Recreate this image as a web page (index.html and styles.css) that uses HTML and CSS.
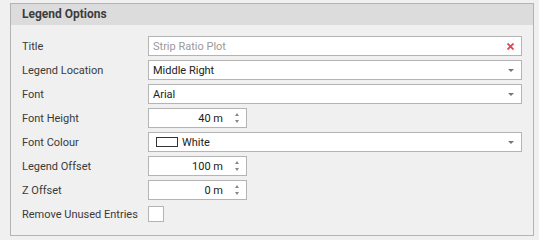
FILE: index.html
```html
<!DOCTYPE html>
<html>
<head>
<meta charset="utf-8">
<link rel="stylesheet" href="styles.css">
</head>
<body>
<div class="panel">
  <div class="panel-header">Legend Options</div>
  <div class="panel-body">
    <div class="label">Title</div>
    <div class="field text">
      <span class="placeholder">Strip Ratio Plot</span>
      <svg class="clear" width="7" height="7" viewBox="0 0 7 7"><path d="M0.5 0.5 L6.5 6.5 M6.5 0.5 L0.5 6.5" stroke="#e8424f" stroke-width="1.8"/></svg>
    </div>

    <div class="label">Legend Location</div>
    <div class="field combo"><span class="value">Middle Right</span><span class="arrow"></span></div>

    <div class="label">Font</div>
    <div class="field combo"><span class="value">Arial</span><span class="arrow"></span></div>

    <div class="label">Font Height</div>
    <div class="field spin"><span class="num">40 m</span><span class="spinner"><span class="up"></span><span class="down"></span></span></div>

    <div class="label">Font Colour</div>
    <div class="field combo"><span class="value color-value"><span class="swatch"></span>White</span><span class="arrow"></span></div>

    <div class="label">Legend Offset</div>
    <div class="field spin"><span class="num">100 m</span><span class="spinner"><span class="up"></span><span class="down"></span></span></div>

    <div class="label">Z Offset</div>
    <div class="field spin"><span class="num">0 m</span><span class="spinner"><span class="up"></span><span class="down"></span></span></div>

    <div class="label">Remove Unused Entries</div>
    <div class="check-cell"><span class="checkbox"></span></div>
  </div>
</div>
</body>
</html>
```
FILE: styles.css
```css
html, body {
  margin: 0;
  padding: 0;
  background: #f0f0f0;
}
body {
  font-family: Roboto, "Noto Sans", sans-serif;
  font-size: 11px;
  color: #333;
  padding: 3px 5px 0 10px;
}
.panel {
  width: 522px;
  border: 1px solid #b4b4b4;
  background: #f0f0f0;
  height: 231px;
}
.panel-header {
  height: 21px;
  background: #dcdcdc;
  font-weight: bold;
  font-size: 12px;
  color: #3c3c3c;
  padding-left: 11px;
  line-height: 21px;
}
.panel-body {
  display: grid;
  grid-template-columns: 126px 374px;
  grid-auto-rows: 20px;
  row-gap: 4px;
  padding: 11px 11px 0 11px;
}
.label {
  display: flex;
  align-items: center;
  color: #3a3a3a;
}
.field {
  box-sizing: border-box;
  border: 1px solid #b4b4b4;
  background: #fff;
  height: 20px;
  display: flex;
  align-items: center;
  padding: 0 5px 0 4px;
  color: #222;
}
.placeholder {
  color: #9a9a9a;
  flex: 1;
}
.clear {
  margin-right: 2px;
}
.value {
  flex: 1;
}
.color-value {
  display: flex;
  align-items: center;
  padding-left: 3px;
}
.swatch {
  box-sizing: border-box;
  width: 22px;
  height: 10px;
  border: 1px solid #333;
  background: #fff;
  margin-right: 4px;
}
.arrow {
  width: 0;
  height: 0;
  border-left: 3px solid transparent;
  border-right: 3px solid transparent;
  border-top: 3px solid #777;
  margin-right: 2px;
}
.spin {
  width: 99px;
  padding-right: 7px;
}
.num {
  flex: 1;
  text-align: right;
  padding-right: 12px;
}
.spinner {
  display: flex;
  flex-direction: column;
  gap: 4px;
}
.up, .down {
  width: 0;
  height: 0;
  border-left: 2.5px solid transparent;
  border-right: 2.5px solid transparent;
}
.up { border-bottom: 3px solid #888; }
.down { border-top: 3px solid #888; }
.check-cell {
  display: flex;
  align-items: center;
}
.checkbox {
  box-sizing: border-box;
  width: 16px;
  height: 16px;
  border: 1px solid #b4b4b4;
  background: #fff;
}
```
